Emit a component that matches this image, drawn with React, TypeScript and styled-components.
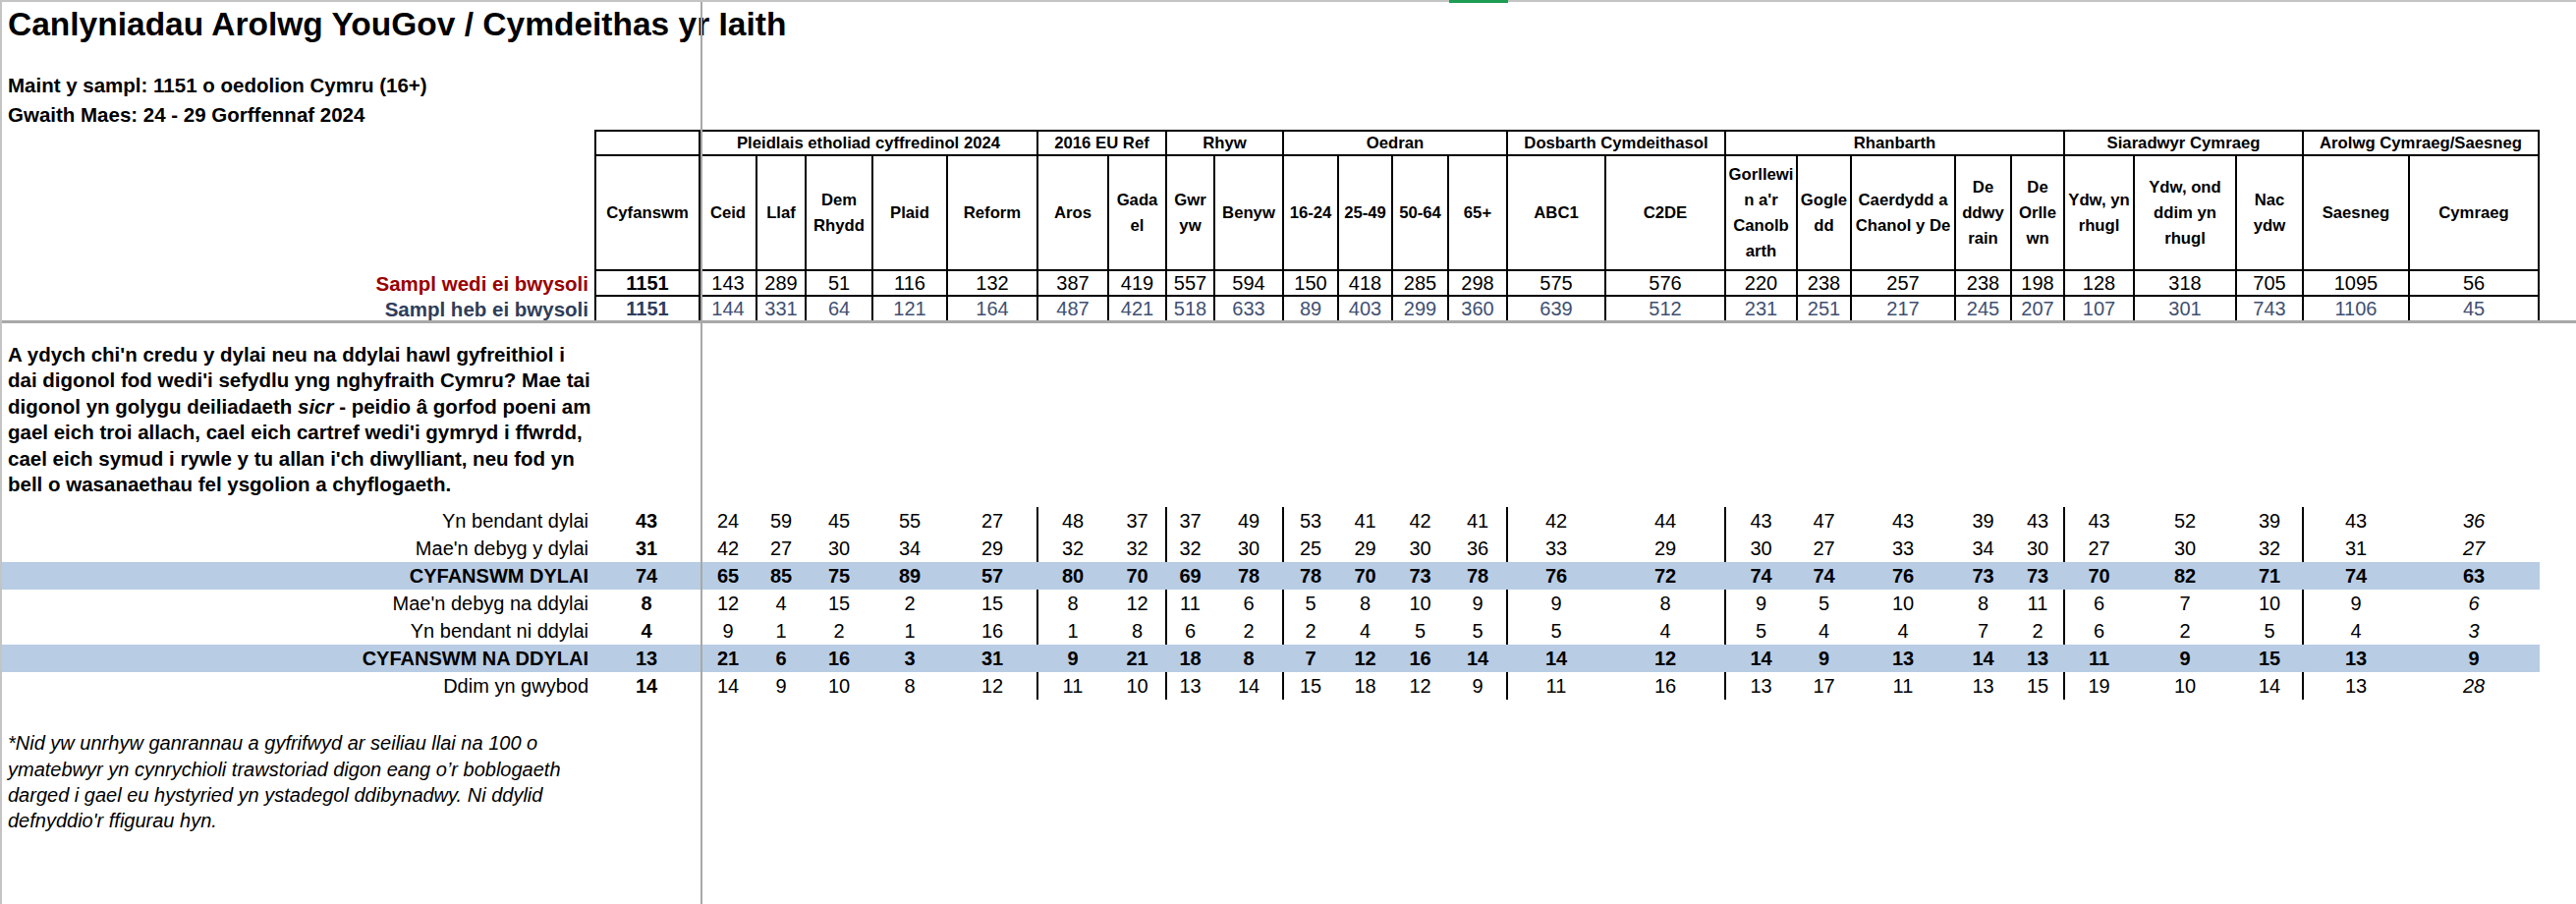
import React from "react";
import styled, { createGlobalStyle, css } from "styled-components";

const COLS = [603, 108, 58, 50, 68, 76, 92, 72, 59, 49, 70, 56, 55, 57, 60, 100, 122, 73, 55, 106, 57, 54, 71, 104, 68, 108, 132];
const gridCols = COLS.map((w) => `${w}px`).join(" ");

const FONT = `"Liberation Sans", Arial, sans-serif`;
const BAND = "#b8cce4";
const LINE = "2px solid #000";

const GlobalStyle = createGlobalStyle`
  html, body {
    margin: 0;
    padding: 0;
    background: #fff;
    overflow: hidden;
  }
  body {
    font-family: ${FONT};
    color: #000;
  }
`;

const Sheet = styled.div`
  position: relative;
  width: 2622px;
  height: 920px;
  box-sizing: border-box;
  border-top: 2px solid #c4c4c4;
  border-left: 2px solid #c4c4c4;
  background: #fff;
`;

const ColumnMark = styled.div`
  position: absolute;
  top: -2px;
  left: 1473px;
  width: 60px;
  height: 3px;
  background: #1f9d55;
`;

const FreezeV = styled.div`
  position: absolute;
  top: 0;
  bottom: 0;
  left: 711px;
  width: 2px;
  background: #a8a8a8;
  z-index: 2;
`;

const FreezeH = styled.div`
  position: absolute;
  left: 0;
  right: 0;
  top: 324px;
  height: 3px;
  background: #a8a8a8;
  z-index: 2;
`;

const Title = styled.h1`
  margin: 3px 0 0;
  padding-left: 6px;
  font-size: 33.5px;
  line-height: 40px;
  font-weight: bold;
  white-space: nowrap;
`;

const Meta = styled.div`
  margin-top: 27px;
  padding-left: 6px;
  font-size: 20.5px;
  font-weight: bold;
  line-height: 30px;
`;

const Grid = styled.div`
  display: grid;
  grid-template-columns: ${gridCols};
`;

const Cell = styled.div<{ $first?: boolean }>`
  box-sizing: border-box;
  display: flex;
  align-items: center;
  justify-content: center;
  text-align: center;
  border-right: ${LINE};
  ${(p) => p.$first && css`border-left: ${LINE};`}
`;

const Blank = styled.div`
  grid-column: 1;
`;

const GroupCell = styled(Cell)<{ $span: number }>`
  grid-column: span ${(p) => p.$span};
  height: 27px;
  border-top: ${LINE};
  border-bottom: ${LINE};
  font-size: 16.7px;
  font-weight: bold;
  white-space: nowrap;
`;

const HeadCell = styled(Cell)`
  height: 117px;
  border-bottom: ${LINE};
  font-size: 16.7px;
  line-height: 26px;
  font-weight: bold;
  flex-direction: column;
  white-space: nowrap;
`;

const toneColor = (t?: "red" | "blue") => (t === "red" ? "#990000" : t === "blue" ? "#2f3d5a" : "#000");

const SampleLabel = styled.div<{ $tone: "red" | "blue" }>`
  grid-column: 1;
  display: flex;
  align-items: center;
  justify-content: flex-end;
  padding-right: 6px;
  font-size: 20.5px;
  font-weight: bold;
  color: ${(p) => toneColor(p.$tone)};
`;

const SampleCell = styled(Cell)<{ $bold?: boolean; $muted?: boolean; $open?: boolean }>`
  height: ${(p) => (p.$open ? 25 : 26)}px;
  border-bottom: ${(p) => (p.$open ? "none" : LINE)};
  font-size: 20px;
  font-weight: ${(p) => (p.$bold ? "bold" : "normal")};
  color: ${(p) => (p.$muted ? (p.$bold ? "#2f3d5a" : "#3f5072") : "#000")};
`;

const Question = styled.div`
  width: 603px;
  box-sizing: border-box;
  padding: 21px 0 10px 6px;
  font-size: 20.5px;
  line-height: 26.4px;
  font-weight: bold;
  white-space: nowrap;
`;

const RowLabel = styled.div<{ $band?: boolean }>`
  grid-column: 1;
  height: 28px;
  display: flex;
  align-items: center;
  justify-content: flex-end;
  padding-right: 6px;
  font-size: 20px;
  font-weight: ${(p) => (p.$band ? "bold" : "normal")};
  background: ${(p) => (p.$band ? BAND : "transparent")};
`;

const DataCell = styled.div<{ $band?: boolean; $bold?: boolean; $rule?: boolean; $italic?: boolean }>`
  box-sizing: border-box;
  height: 28px;
  display: flex;
  align-items: center;
  justify-content: center;
  font-size: 20px;
  font-weight: ${(p) => (p.$band || p.$bold ? "bold" : "normal")};
  font-style: ${(p) => (p.$italic ? "italic" : "normal")};
  background: ${(p) => (p.$band ? BAND : "transparent")};
  border-right: ${(p) => (p.$rule && !p.$band ? LINE : "2px solid transparent")};
`;

const Footnote = styled.div`
  margin-top: 31px;
  padding-left: 6px;
  font-size: 20px;
  line-height: 26.2px;
  font-style: italic;
  white-space: nowrap;
`;

const groups = [
  { label: "", span: 1 },
  { label: "Pleidlais etholiad cyffredinol 2024", span: 5 },
  { label: "2016 EU Ref", span: 2 },
  { label: "Rhyw", span: 2 },
  { label: "Oedran", span: 4 },
  { label: "Dosbarth Cymdeithasol", span: 2 },
  { label: "Rhanbarth", span: 5 },
  { label: "Siaradwyr Cymraeg", span: 3 },
  { label: "Arolwg Cymraeg/Saesneg", span: 2 },
];

const headers: string[][] = [
  ["Cyfanswm"], ["Ceid"], ["Llaf"], ["Dem", "Rhydd"], ["Plaid"], ["Reform"],
  ["Aros"], ["Gada", "el"], ["Gwr", "yw"], ["Benyw"],
  ["16-24"], ["25-49"], ["50-64"], ["65+"], ["ABC1"], ["C2DE"],
  ["Gorllewi", "n a'r", "Canolb", "arth"], ["Gogle", "dd"], ["Caerdydd a", "Chanol y De"],
  ["De", "ddwy", "rain"], ["De", "Orlle", "wn"],
  ["Ydw, yn", "rhugl"], ["Ydw, ond", "ddim yn", "rhugl"], ["Nac", "ydw"],
  ["Saesneg"], ["Cymraeg"],
];

const weighted = [1151, 143, 289, 51, 116, 132, 387, 419, 557, 594, 150, 418, 285, 298, 575, 576, 220, 238, 257, 238, 198, 128, 318, 705, 1095, 56];
const unweighted = [1151, 144, 331, 64, 121, 164, 487, 421, 518, 633, 89, 403, 299, 360, 639, 512, 231, 251, 217, 245, 207, 107, 301, 743, 1106, 45];

// columns that close a group: a rule is drawn on their right side in the body
const groupEnds = new Set([5, 7, 9, 13, 15, 20, 23]);

const rows: { label: string; band?: boolean; values: number[] }[] = [
  { label: "Yn bendant dylai", values: [43, 24, 59, 45, 55, 27, 48, 37, 37, 49, 53, 41, 42, 41, 42, 44, 43, 47, 43, 39, 43, 43, 52, 39, 43, 36] },
  { label: "Mae'n debyg y dylai", values: [31, 42, 27, 30, 34, 29, 32, 32, 32, 30, 25, 29, 30, 36, 33, 29, 30, 27, 33, 34, 30, 27, 30, 32, 31, 27] },
  { label: "CYFANSWM DYLAI", band: true, values: [74, 65, 85, 75, 89, 57, 80, 70, 69, 78, 78, 70, 73, 78, 76, 72, 74, 74, 76, 73, 73, 70, 82, 71, 74, 63] },
  { label: "Mae'n debyg na ddylai", values: [8, 12, 4, 15, 2, 15, 8, 12, 11, 6, 5, 8, 10, 9, 9, 8, 9, 5, 10, 8, 11, 6, 7, 10, 9, 6] },
  { label: "Yn bendant ni ddylai", values: [4, 9, 1, 2, 1, 16, 1, 8, 6, 2, 2, 4, 5, 5, 5, 4, 5, 4, 4, 7, 2, 6, 2, 5, 4, 3] },
  { label: "CYFANSWM NA DDYLAI", band: true, values: [13, 21, 6, 16, 3, 31, 9, 21, 18, 8, 7, 12, 16, 14, 14, 12, 14, 9, 13, 14, 13, 11, 9, 15, 13, 9] },
  { label: "Ddim yn gwybod", values: [14, 14, 9, 10, 8, 12, 11, 10, 13, 14, 15, 18, 12, 9, 11, 16, 13, 17, 11, 13, 15, 19, 10, 14, 13, 28] },
];

const footnote = [
  "*Nid yw unrhyw ganrannau a gyfrifwyd ar seiliau llai na 100 o",
  "ymatebwyr yn cynrychioli trawstoriad digon eang o’r boblogaeth",
  "darged i gael eu hystyried yn ystadegol ddibynadwy. Ni ddylid",
  "defnyddio'r ffigurau hyn.",
];

export default function App() {
  return (
    <>
      <GlobalStyle />
      <Sheet>
        <ColumnMark />
        <FreezeV />
        <FreezeH />

        <Title>Canlyniadau Arolwg YouGov / Cymdeithas yr Iaith</Title>
        <Meta>
          <div>Maint y sampl: 1151 o oedolion Cymru (16+)</div>
          <div>Gwaith Maes: 24 - 29 Gorffennaf 2024</div>
        </Meta>

        {/* pennawd y tabl */}
        <Grid>
          <Blank />
          {groups.map((g, i) => (
            <GroupCell key={i} $span={g.span} $first={i === 0}>
              {g.label}
            </GroupCell>
          ))}

          <Blank />
          {headers.map((h, i) => (
            <HeadCell key={i} $first={i === 0}>
              {h.map((line, j) => (
                <span key={j}>{line}</span>
              ))}
            </HeadCell>
          ))}

          <SampleLabel $tone="red">Sampl wedi ei bwysoli</SampleLabel>
          {weighted.map((v, i) => (
            <SampleCell key={i} $first={i === 0} $bold={i === 0}>
              {v}
            </SampleCell>
          ))}

          <SampleLabel $tone="blue">Sampl heb ei bwysoli</SampleLabel>
          {unweighted.map((v, i) => (
            <SampleCell key={i} $first={i === 0} $bold={i === 0} $muted $open>
              {v}
            </SampleCell>
          ))}
        </Grid>

        {/* cwestiwn */}
        <Question>
          <div>A ydych chi'n credu y dylai neu na ddylai hawl gyfreithiol i</div>
          <div>dai digonol fod wedi'i sefydlu yng nghyfraith Cymru? Mae tai</div>
          <div>
            digonol yn golygu deiliadaeth <i>sicr</i> - peidio â gorfod poeni am
          </div>
          <div>gael eich troi allach, cael eich cartref wedi'i gymryd i ffwrdd,</div>
          <div>cael eich symud i rywle y tu allan i'ch diwylliant, neu fod yn</div>
          <div>bell o wasanaethau fel ysgolion a chyflogaeth.</div>
        </Question>

        {/* canlyniadau */}
        <Grid>
          {rows.map((r) => (
            <React.Fragment key={r.label}>
              <RowLabel $band={r.band}>{r.label}</RowLabel>
              {r.values.map((v, i) => (
                <DataCell
                  key={i}
                  $band={r.band}
                  $bold={i === 0}
                  $rule={groupEnds.has(i)}
                  $italic={!r.band && i === r.values.length - 1}
                >
                  {v}
                </DataCell>
              ))}
            </React.Fragment>
          ))}
        </Grid>

        <Footnote>
          {footnote.map((line) => (
            <div key={line}>{line}</div>
          ))}
        </Footnote>
      </Sheet>
    </>
  );
}
